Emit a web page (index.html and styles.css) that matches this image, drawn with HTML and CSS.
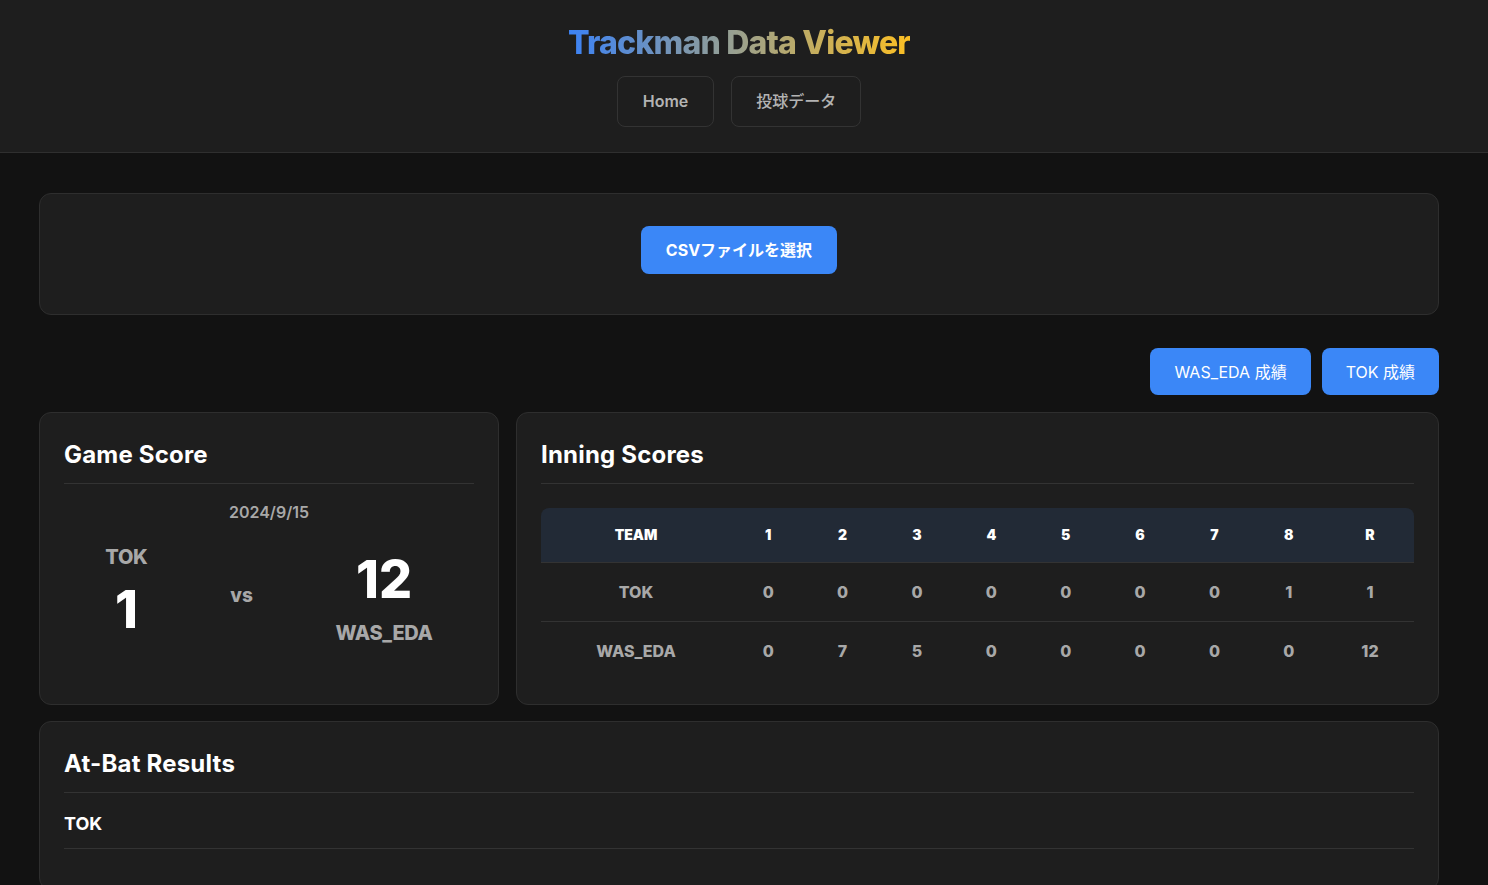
FILE: index.html
```html
<!DOCTYPE html>
<html lang="ja">
<head>
<meta charset="utf-8">
<title>Trackman Data Viewer</title>
<link rel="stylesheet" href="styles.css">
</head>
<body>
<header class="site-header">
  <h1 class="logo">Trackman Data Viewer</h1>
  <nav class="nav">
    <a class="nav-btn" href="#">Home</a>
    <a class="nav-btn nav-btn-jp" href="#">投球データ</a>
  </nav>
</header>
<main class="main">
  <section class="card upload-card">
    <button class="btn-primary btn-bold">CSVファイルを選択</button>
  </section>

  <div class="team-actions">
    <button class="btn-primary">WAS_EDA 成績</button>
    <button class="btn-primary">TOK 成績</button>
  </div>

  <div class="score-grid">
    <section class="card">
      <h2 class="card-title">Game Score</h2>
      <div class="game-date">2024/9/15</div>
      <div class="score-row">
        <div class="team team-home">
          <div class="team-name">TOK</div>
          <div class="team-score">1</div>
        </div>
        <div class="vs">vs</div>
        <div class="team team-away">
          <div class="team-score">12</div>
          <div class="team-name">WAS_EDA</div>
        </div>
      </div>
    </section>

    <section class="card">
      <h2 class="card-title">Inning Scores</h2>
      <table class="inning-table">
        <thead>
          <tr>
            <th class="col-team">TEAM</th>
            <th>1</th><th>2</th><th>3</th><th>4</th><th>5</th><th>6</th><th>7</th><th>8</th>
            <th class="col-r">R</th>
          </tr>
        </thead>
        <tbody>
          <tr>
            <td>TOK</td>
            <td>0</td><td>0</td><td>0</td><td>0</td><td>0</td><td>0</td><td>0</td><td>1</td>
            <td>1</td>
          </tr>
          <tr>
            <td>WAS_EDA</td>
            <td>0</td><td>7</td><td>5</td><td>0</td><td>0</td><td>0</td><td>0</td><td>0</td>
            <td>12</td>
          </tr>
        </tbody>
      </table>
    </section>
  </div>

  <section class="card atbat-card">
    <h2 class="card-title">At-Bat Results</h2>
    <h3 class="team-heading">TOK</h3>
  </section>
</main>
</body>
</html>
```
FILE: styles.css
```css
* { box-sizing: border-box; }

html, body {
  margin: 0;
  padding: 0;
  background: #121212;
  color: #ffffff;
  font-family: Inter, "Noto Sans CJK JP", sans-serif;
  overflow: hidden;
}

.site-header {
  background: #1e1e1e;
  border-bottom: 1px solid #2f2f2f;
  padding: 24px 10px 25px 0;
  display: flex;
  flex-direction: column;
  align-items: center;
}

.logo {
  margin: 0 0 14px;
  font-size: 32px;
  line-height: 38px;
  font-weight: 800;
  letter-spacing: -0.8px;
  background: linear-gradient(90deg, #3b82f6 0%, #fbbf24 100%);
  -webkit-background-clip: text;
  background-clip: text;
  color: transparent;
}

.nav {
  display: flex;
  gap: 17px;
}

.nav-btn {
  display: flex;
  align-items: center;
  height: 51px;
  padding: 0 25px;
  border: 1px solid #333333;
  border-radius: 8px;
  color: #b3b3b3;
  text-decoration: none;
  font-size: 16px;
  line-height: 23px;
  font-weight: 600;
}

.nav-btn-jp {
  font-weight: 500;
  padding: 0 24px;
}

.main {
  padding: 40px 49px 0 39px;
}

.card {
  background: #1e1e1e;
  border: 1px solid #2e2e2e;
  border-radius: 12px;
  padding: 24px;
}

.upload-card {
  padding: 32px 24px 40px;
  display: flex;
  justify-content: center;
}

.btn-primary {
  background: #3b87f7;
  color: #ffffff;
  border: none;
  border-radius: 8px;
  padding: 12px 24px;
  font-family: Inter, "Noto Sans CJK JP", sans-serif;
  font-size: 16px;
  line-height: 24px;
  font-weight: 400;
  cursor: pointer;
}

.btn-bold {
  font-weight: 700;
  padding: 12px 25px;
}

.team-actions {
  display: flex;
  justify-content: flex-end;
  gap: 11px;
  margin: 33px 0 17px;
}

.team-actions .btn-primary {
  height: 47px;
}

.score-grid {
  display: grid;
  grid-template-columns: 460px 1fr;
  gap: 17px;
}

.card-title {
  margin: 0;
  font-size: 24px;
  line-height: 36px;
  font-weight: 700;
  letter-spacing: 0.2px;
  padding-bottom: 10px;
  border-bottom: 1px solid #333333;
}

.game-date {
  margin-top: 16px;
  text-align: center;
  color: #a8a8a8;
  font-size: 16px;
  line-height: 24px;
  font-weight: 600;
}

.score-row {
  margin-top: 19px;
  display: flex;
  justify-content: space-around;
  align-items: center;
}

.team {
  display: flex;
  flex-direction: column;
  align-items: center;
  gap: 13px;
}

.team-home { padding-bottom: 11px; }
.team-away { padding-top: 11px; }

.team-name {
  color: #a8a8a8;
  font-size: 20px;
  line-height: 28px;
  font-weight: 800;
  letter-spacing: -0.3px;
}

.team-score {
  color: #ffffff;
  font-size: 52px;
  line-height: 52px;
  font-weight: 800;
}

.vs {
  color: #a8a8a8;
  font-size: 19px;
  font-weight: 800;
}

.inning-table {
  margin-top: 24px;
  width: 100%;
  border-collapse: separate;
  border-spacing: 0;
  table-layout: fixed;
}

.inning-table th {
  background: #222a36;
  color: #ffffff;
  font-size: 14px;
  line-height: 22px;
  font-weight: 900;
  padding: 16px 4px;
  text-align: center;
}

.inning-table th.col-team {
  width: 190px;
  border-top-left-radius: 8px;
}

.inning-table th.col-r {
  width: 88px;
  border-top-right-radius: 8px;
}

.inning-table td {
  border-top: 1px solid #333333;
  color: #a8a8a8;
  font-size: 16px;
  line-height: 24px;
  font-weight: 800;
  padding: 17px 4px;
  text-align: center;
}

.atbat-card {
  margin-top: 16px;
  padding-bottom: 40px;
}

.team-heading {
  margin: 17px 0 0;
  font-size: 18px;
  line-height: 28px;
  font-weight: 700;
  padding-bottom: 10px;
  border-bottom: 1px solid #333333;
}
```
